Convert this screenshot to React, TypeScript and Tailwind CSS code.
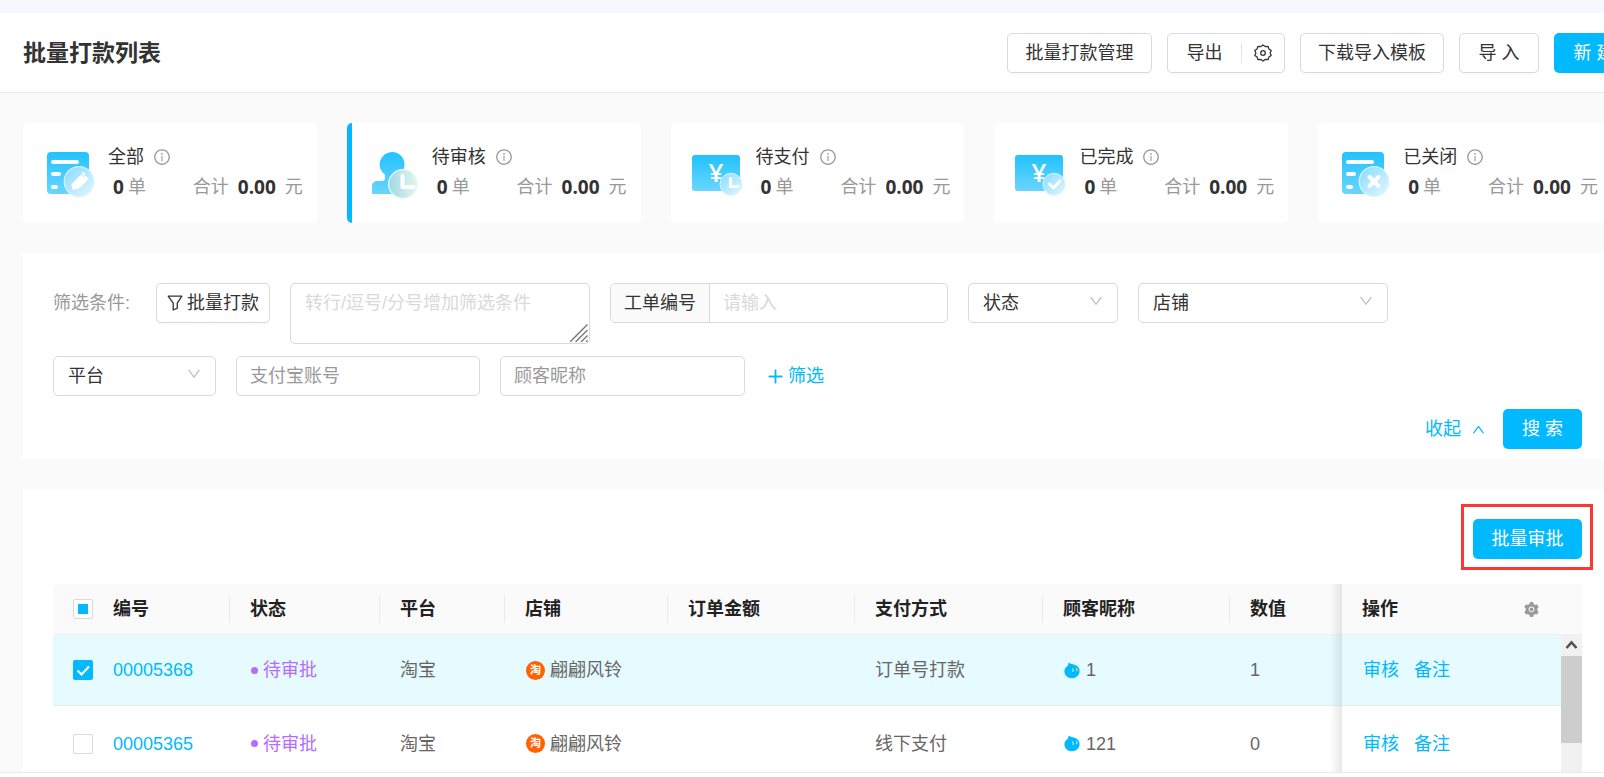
import { useEffect, useId, useRef, useState } from "react";
import type { ReactNode } from "react";
import {
  AiFillSetting,
  AiOutlineDown,
  AiOutlineInfoCircle,
  AiOutlinePlus,
  AiOutlineUp,
} from "react-icons/ai";
import clsx from "clsx";

/* ---------- icons ---------- */

function BlueGradient({ id }: { id: string }) {
  return (
    <defs>
      <linearGradient id={id} x1="0" y1="0" x2="0" y2="1">
        <stop offset="0" stopColor="#22c2ff" />
        <stop offset="1" stopColor="#6ad5ff" />
      </linearGradient>
      <linearGradient id={id + "b"} x1="0" y1="0" x2="1" y2="1">
        <stop offset="0" stopColor="#86dbff" />
        <stop offset="1" stopColor="#e4f7ff" />
      </linearGradient>
      <linearGradient id={id + "c"} x1="0" y1="0" x2="1" y2="0">
        <stop offset="0" stopColor="#9fd8e6" />
        <stop offset="1" stopColor="#e6f6ee" />
      </linearGradient>
    </defs>
  );
}

function ListIcon({ mark }: { mark: "pen" | "cross" }) {
  const id = useId();
  return (
    <svg viewBox="0 0 52 48" className="h-12 w-[52px] flex-none" aria-hidden="true">
      <BlueGradient id={id} />
      <rect x="3" y="1" width="42" height="42" rx="4" fill={`url(#${id})`} />
      <g stroke="#fff" strokeWidth="4" strokeLinecap="round">
        <path d="M9 11H33" />
        <path d="M9 23h6" />
        <path d="M9 36h3" />
      </g>
      <circle cx="35" cy="30.5" r="14.8" fill={`url(#${id}b)`} stroke="#d6f3ff" strokeWidth="1.2" />
      {mark === "pen" ? (
        <path
          d="M28 33.5l9-9.5 2.8 2.6 1.6-1.7 2.8 3.2-9 8.8-6.4 1.6z M38 22.6l1.2-1.2 2 1.8-1.2 1.3z"
          fill="#fff"
          stroke="#fff"
          strokeWidth="1"
          strokeLinejoin="round"
        />
      ) : (
        <path d="M30.5 26l9 9M39.5 26l-9 9" stroke="#fff" strokeWidth="4" strokeLinecap="round" />
      )}
    </svg>
  );
}

function PersonIcon() {
  const id = useId();
  return (
    <svg viewBox="0 0 52 48" className="h-12 w-[52px] flex-none" aria-hidden="true">
      <BlueGradient id={id} />
      <path
        d="M24 1a12.5 12.5 0 0 1 8 22.2v8.3h9a3 3 0 0 1 3 3V43H4V35a5 5 0 0 1 5-5h5q3 0 3-3.5V23.8A12.5 12.5 0 0 1 24 1z"
        fill={`url(#${id})`}
      />
      <circle cx="35" cy="33" r="14.4" fill={`url(#${id}c)`} stroke="#eafaf6" strokeWidth="1.2" />
      <path d="M34.5 24.5V36H45.5" fill="none" stroke="#fff" strokeWidth="4" strokeLinecap="round" strokeLinejoin="round" />
    </svg>
  );
}

function MoneyIcon({ mark }: { mark: "clock" | "check" }) {
  const id = useId();
  return (
    <svg viewBox="0 0 52 48" className="h-12 w-[52px] flex-none" aria-hidden="true">
      <BlueGradient id={id} />
      <rect x="0" y="4" width="48" height="36" rx="3" fill={`url(#${id})`} />
      <text x="24" y="31" textAnchor="middle" fontSize="26" fontWeight="600" fill="#fff" className="font-['Open_Sans',sans-serif]">
        ¥
      </text>
      <circle cx="39" cy="33.3" r="11" fill={`url(#${id}b)`} stroke="#d9f4ff" strokeWidth="1" />
      {mark === "clock" ? (
        <path d="M38.5 27.5V35.5H46" fill="none" stroke="#fff" strokeWidth="3.2" strokeLinecap="round" />
      ) : (
        <path d="M34.5 33l4 4 6.5-7" fill="none" stroke="#fff" strokeWidth="3" strokeLinecap="round" strokeLinejoin="round" />
      )}
    </svg>
  );
}

function FlowerGear() {
  return (
    <svg viewBox="0 0 18 18" className="size-[18px]" fill="none" stroke="currentColor" strokeWidth="1.3" aria-hidden="true">
      <path
        strokeLinejoin="round"
        d="M9 .9 11.2 2.6 14 2.3 14.9 4.9 17.2 6.6 16.1 9 17.2 11.4 14.9 13.1 14 15.7 11.2 15.4 9 17.1 6.8 15.4 4 15.7 3.1 13.1 .8 11.4 1.9 9 .8 6.6 3.1 4.9 4 2.3 6.8 2.6z"
      />
      <circle cx="9" cy="9" r="2.3" />
    </svg>
  );
}

function Funnel() {
  return (
    <svg viewBox="0 0 16 16" className="size-4" fill="none" stroke="currentColor" strokeWidth="1.3" strokeLinejoin="round" aria-hidden="true">
      <path d="M1.2 1.2h13.6L10.3 8.2v5L6.2 15V8.2z" />
    </svg>
  );
}

function WaterDrop() {
  return (
    <svg viewBox="0 0 16 17" className="h-[17px] w-4 flex-none" aria-hidden="true">
      <path
        d="M4.6 .4C6.2 2 9.2 1.9 11.8 3.2 14.3 4.500 15.600 6.500 15.600 9c0 4.200-3.400 7.200-7.700 7.200S.4 13.200.4 9.200c0-2.500 1.400-4.400 3.500-5.500z"
        fill="#00b9ff"
      />
      <path d="M8.800 6.800q.9 1.300.2 2.800M12.600 6.200q.9 1.300.2 2.600" fill="none" stroke="#e6fbff" strokeWidth="1" strokeLinecap="round" />
    </svg>
  );
}

/* ---------- controls ---------- */

function OutlineButton({ children, className }: { children: ReactNode; className?: string }) {
  return (
    <button
      type="button"
      className={clsx(
        "flex h-10 flex-none items-center justify-center rounded-[5px] border border-[#d9d9d9] bg-white whitespace-nowrap text-[#333] shadow-[0_2px_0_rgba(0,0,0,0.02)]",
        className,
      )}
    >
      {children}
    </button>
  );
}

function PrimaryButton({ children, className }: { children: ReactNode; className?: string }) {
  return (
    <button
      type="button"
      className={clsx(
        "flex h-10 flex-none items-center justify-center rounded-[5px] bg-[#00b9ff] whitespace-nowrap text-white",
        className,
      )}
    >
      {children}
    </button>
  );
}

function FilterSelect({ label, className }: { label: string; className?: string }) {
  return (
    <div className={clsx("relative flex-none", className)}>
      <select
        aria-label={label}
        className="h-10 w-full appearance-none rounded-[5px] border border-[#d9d9d9] bg-white pr-10 pl-[14px] text-[#333] outline-none"
      >
        <option>{label}</option>
      </select>
      <AiOutlineDown className="pointer-events-none absolute top-[10px] right-[14px] size-4 text-[#bfbfbf]" />
    </div>
  );
}

function Tick({ checked, mixed, label }: { checked?: boolean; mixed?: boolean; label: string }) {
  const [on, setOn] = useState(!!checked);
  const ref = useRef<HTMLInputElement>(null);
  useEffect(() => {
    if (ref.current) ref.current.indeterminate = !!mixed;
  }, [mixed]);
  return (
    <label className="grid size-5 place-items-center">
      <input
        ref={ref}
        type="checkbox"
        aria-label={label}
        checked={on}
        onChange={(e) => setOn(e.target.checked)}
        className="col-start-1 row-start-1 size-5 appearance-none rounded-[2px] border border-[#d9d9d9] bg-white checked:border-[#00b9ff] checked:bg-[#00b9ff]"
      />
      {mixed && <span className="pointer-events-none col-start-1 row-start-1 size-[10px] bg-[#00b9ff]" />}
      {on && !mixed && (
        <svg viewBox="0 0 20 20" className="pointer-events-none col-start-1 row-start-1 size-5" fill="none" stroke="#fff" strokeWidth="2.2" aria-hidden="true">
          <path d="M4.5 10.5l4 4 7.5-8" />
        </svg>
      )}
    </label>
  );
}

/* ---------- summary cards ---------- */

const cards: { title: string; icon: ReactNode; active?: boolean }[] = [
  { title: "全部", icon: <ListIcon mark="pen" /> },
  { title: "待审核", icon: <PersonIcon />, active: true },
  { title: "待支付", icon: <MoneyIcon mark="clock" /> },
  { title: "已完成", icon: <MoneyIcon mark="check" /> },
  { title: "已关闭", icon: <ListIcon mark="cross" /> },
];

function SummaryCard({ title, icon, active }: { title: string; icon: ReactNode; active?: boolean }) {
  return (
    <div
      className={clsx(
        "flex h-[100px] items-center gap-3 rounded-[5px] border-l-[5px] bg-white pr-[14px] pl-4",
        active ? "border-[#00b9ff]" : "border-white",
      )}
    >
      <div className="pt-1">{icon}</div>
      <div className="min-w-0 flex-1 pb-[2px] whitespace-nowrap">
        <div className="flex h-[30px] items-center gap-[9px] text-[#333]">
          {title}
          <AiOutlineInfoCircle className="size-[18px] text-[#999]" />
        </div>
        <div className="flex h-[30px] items-center justify-between pl-[5px] text-[#999]">
          <span className="flex items-center gap-1">
            <b className="font-['Open_Sans','Noto_Sans',sans-serif] text-[19px] text-[#333]">0</b>
            单
          </span>
          <span className="flex items-center gap-[9px]">
            合计
            <b className="font-['Open_Sans','Noto_Sans',sans-serif] text-[19px] text-[#333]">0.00</b>
            元
          </span>
        </div>
      </div>
    </div>
  );
}

/* ---------- table ---------- */

const columns = [
  { title: "编号", width: "w-[137px]" },
  { title: "状态", width: "w-[150px]" },
  { title: "平台", width: "w-[125px]" },
  { title: "店铺", width: "w-[163px]" },
  { title: "订单金额", width: "w-[187px]" },
  { title: "支付方式", width: "w-[188px]" },
  { title: "顾客昵称", width: "w-[187px]" },
  { title: "数值", width: "w-[112px]" },
];

const rows = [
  { id: "00005368", pay: "订单号打款", nick: "1", value: "1", checked: true },
  { id: "00005365", pay: "线下支付", nick: "121", value: "0", checked: false },
];

function OrderTable() {
  return (
    <div className="relative">
      <table className="w-full table-fixed border-separate border-spacing-0 text-left whitespace-nowrap">
        <thead>
          <tr className="h-[51px] bg-[#fafafa] text-[#222]">
            <th className="w-10 rounded-tl-[5px] border-b border-[#f0f0f0] pl-5">
              <Tick mixed label="全选" />
            </th>
            {columns.map((c, i) => (
              <th key={c.title} className={clsx("border-b border-[#f0f0f0] p-0 font-bold", c.width)}>
                <div className={clsx("flex h-7 items-center pl-5", i < columns.length - 1 && "border-r border-[#ebebeb]")}>
                  {c.title}
                </div>
              </th>
            ))}
            <th className="w-60 border-b border-[#f0f0f0] pr-[42px] pl-5 font-bold">
              <div className="flex items-center justify-between">
                操作
                <button type="button" aria-label="列设置" className="text-[#999]">
                  <AiFillSetting className="size-[17px]" />
                </button>
              </div>
            </th>
          </tr>
        </thead>
        <tbody className="text-[#666]">
          {rows.map((r) => (
            <tr key={r.id} className={clsx("[&>td]:border-b [&>td]:border-[#ebebeb] [&>td]:py-0 [&>td]:pl-5", r.checked ? "h-[71px] bg-[#e6fbff]" : "h-[76px] bg-white")}>
              <td>
                <Tick checked={r.checked} label={"选择 " + r.id} />
              </td>
              <td>
                <a href="#detail" className="text-[#00b9ff]">{r.id}</a>
              </td>
              <td className="text-[#b56cff]">
                <div className="flex items-center gap-[5px] pl-px">
                  <span className="size-[7px] rounded-full bg-[#b56cff]" />
                  待审批
                </div>
              </td>
              <td>淘宝</td>
              <td>
                <div className="flex items-center gap-[5px] pl-px">
                  <span className="flex size-[19px] flex-none items-center justify-center rounded-full bg-[#ff6200] text-[11px] leading-none font-bold text-white">
                    淘
                  </span>
                  翩翩风铃
                </div>
              </td>
              <td />
              <td>{r.pay}</td>
              <td>
                <div className="flex items-center gap-[6px] pl-px">
                  <WaterDrop />
                  {r.nick}
                </div>
              </td>
              <td>{r.value}</td>
              <td>
                <div className="flex gap-[15px] pl-px text-[#00b9ff]">
                  <a href="#review">审核</a>
                  <a href="#remark">备注</a>
                </div>
              </td>
            </tr>
          ))}
        </tbody>
      </table>

      {/* edge shadow of the pinned action column */}
      <div className="pointer-events-none absolute inset-y-0 right-60 w-3 bg-linear-to-l from-black/9 to-transparent" />

      {/* vertical scroll bar over the body rows */}
      <div className="absolute top-[50px] right-0 bottom-0 w-[21px] bg-[#f1f1f1]">
        <svg viewBox="0 0 21 22" className="h-[22px] w-[21px]" fill="none" stroke="#505050" strokeWidth="2.6" aria-hidden="true">
          <path d="M5.5 14l5-5.5 5 5.5" />
        </svg>
        <div className="h-[87px] bg-[#cdcdcd]" />
      </div>
    </div>
  );
}

/* ---------- page ---------- */

export default function App() {
  return (
    <div className="flex h-screen flex-col overflow-hidden bg-white font-['Liberation_Sans','Noto_Sans_CJK_SC',sans-serif] text-[18px] leading-[26px]">
      <div className="flex min-h-0 min-w-[1635px] flex-1 flex-col overflow-hidden border-b border-[#ebebeb] bg-[#fafafa]">
        <div className="h-[13px] flex-none bg-[#f5f9fd]" />
        <header className="flex h-20 flex-none items-center gap-[15px] border-b border-[#ebebeb] bg-white pr-px pl-[23px]">
          <h1 className="mr-auto text-[23px] font-bold text-[#333]">批量打款列表</h1>
          <OutlineButton className="w-[145px]">批量打款管理</OutlineButton>
          <div className="flex h-10 w-[118px] items-center rounded-[5px] border border-[#d9d9d9] bg-white text-[#333] shadow-[0_2px_0_rgba(0,0,0,0.02)]">
            <button type="button" className="h-5 w-[73px] leading-5">导出</button>
            <button type="button" aria-label="导出设置" className="flex h-5 flex-1 items-center justify-center border-l border-[#e3e3e3]">
              <FlowerGear />
            </button>
          </div>
          <OutlineButton className="w-[144px]">下载导入模板</OutlineButton>
          <OutlineButton className="w-20">导 入</OutlineButton>
          <PrimaryButton className="w-20">新 建</PrimaryButton>
        </header>

        <main className="flex flex-none flex-col gap-[30px] px-[23px] pt-[30px]">
          <section className="grid grid-cols-5 gap-[30px]">
            {cards.map((c) => (
              <SummaryCard key={c.title} {...c} />
            ))}
          </section>

          <section className="bg-white px-[30px] pt-[30px] pb-[10px]">
            <div className="flex items-start gap-5">
              <span className="w-[83px] flex-none whitespace-nowrap text-[#999] leading-10">筛选条件:</span>
              <OutlineButton className="w-[114px] gap-1">
                <Funnel />
                批量打款
              </OutlineButton>
              <div className="relative h-[61px] w-[300px] flex-none">
                <textarea
                  aria-label="筛选条件"
                  placeholder="转行/逗号/分号增加筛选条件"
                  className="h-full w-full resize-none rounded-[5px] border border-[#d9d9d9] px-[14px] py-[6px] outline-none placeholder:text-[#d9d9d9]"
                />
                <svg viewBox="0 0 18 18" className="pointer-events-none absolute right-[2px] bottom-[2px] size-[18px]" stroke="#777" strokeWidth="1.4" aria-hidden="true">
                  <path d="M0 18L17.5 .5M5.5 18l12-12M11 18l6.5-6.5M16 18l1.5-1.5" />
                </svg>
              </div>
              <div className="flex h-10 w-[338px] flex-none overflow-hidden rounded-[5px] border border-[#d9d9d9]">
                <label htmlFor="ticket" className="flex w-[99px] flex-none items-center justify-center border-r border-[#d9d9d9] bg-[#fafafa] text-[#333]">
                  工单编号
                </label>
                <input id="ticket" placeholder="请输入" className="min-w-0 flex-1 px-[13px] outline-none placeholder:text-[#d9d9d9]" />
              </div>
              <FilterSelect label="状态" className="w-[150px]" />
              <FilterSelect label="店铺" className="w-[250px]" />
            </div>

            <div className="mt-3 flex items-center gap-5">
              <FilterSelect label="平台" className="w-[163px]" />
              <input aria-label="支付宝账号" placeholder="支付宝账号" className="h-10 w-[244px] rounded-[5px] border border-[#d9d9d9] px-[13px] outline-none placeholder:text-[#999]" />
              <input aria-label="顾客昵称" placeholder="顾客昵称" className="h-10 w-[245px] rounded-[5px] border border-[#d9d9d9] px-[13px] outline-none placeholder:text-[#999]" />
              <button type="button" className="flex items-center gap-[3px] pl-px text-[#00b9ff]">
                <AiOutlinePlus className="size-[19px] stroke-[20]" />
                筛选
              </button>
            </div>

            <div className="mt-[13px] flex items-center justify-end gap-[17px]">
              <button type="button" className="flex items-center gap-[10px] text-[#00b9ff]">
                收起
                <AiOutlineUp className="size-[15px]" />
              </button>
              <PrimaryButton className="w-[79px]">搜 索</PrimaryButton>
            </div>
          </section>

          <section className="bg-white px-[30px] pt-[15px]">
            <div className="mb-[14px] flex justify-end">
              <div className="-mr-[11px] border-[3px] border-[#fb3838] pt-3 pr-2 pb-2 pl-[9px]">
                <PrimaryButton className="w-[109px]">批量审批</PrimaryButton>
              </div>
            </div>
            <OrderTable />
          </section>
        </main>
      </div>
      <div className="h-1 flex-none bg-white" />
    </div>
  );
}
